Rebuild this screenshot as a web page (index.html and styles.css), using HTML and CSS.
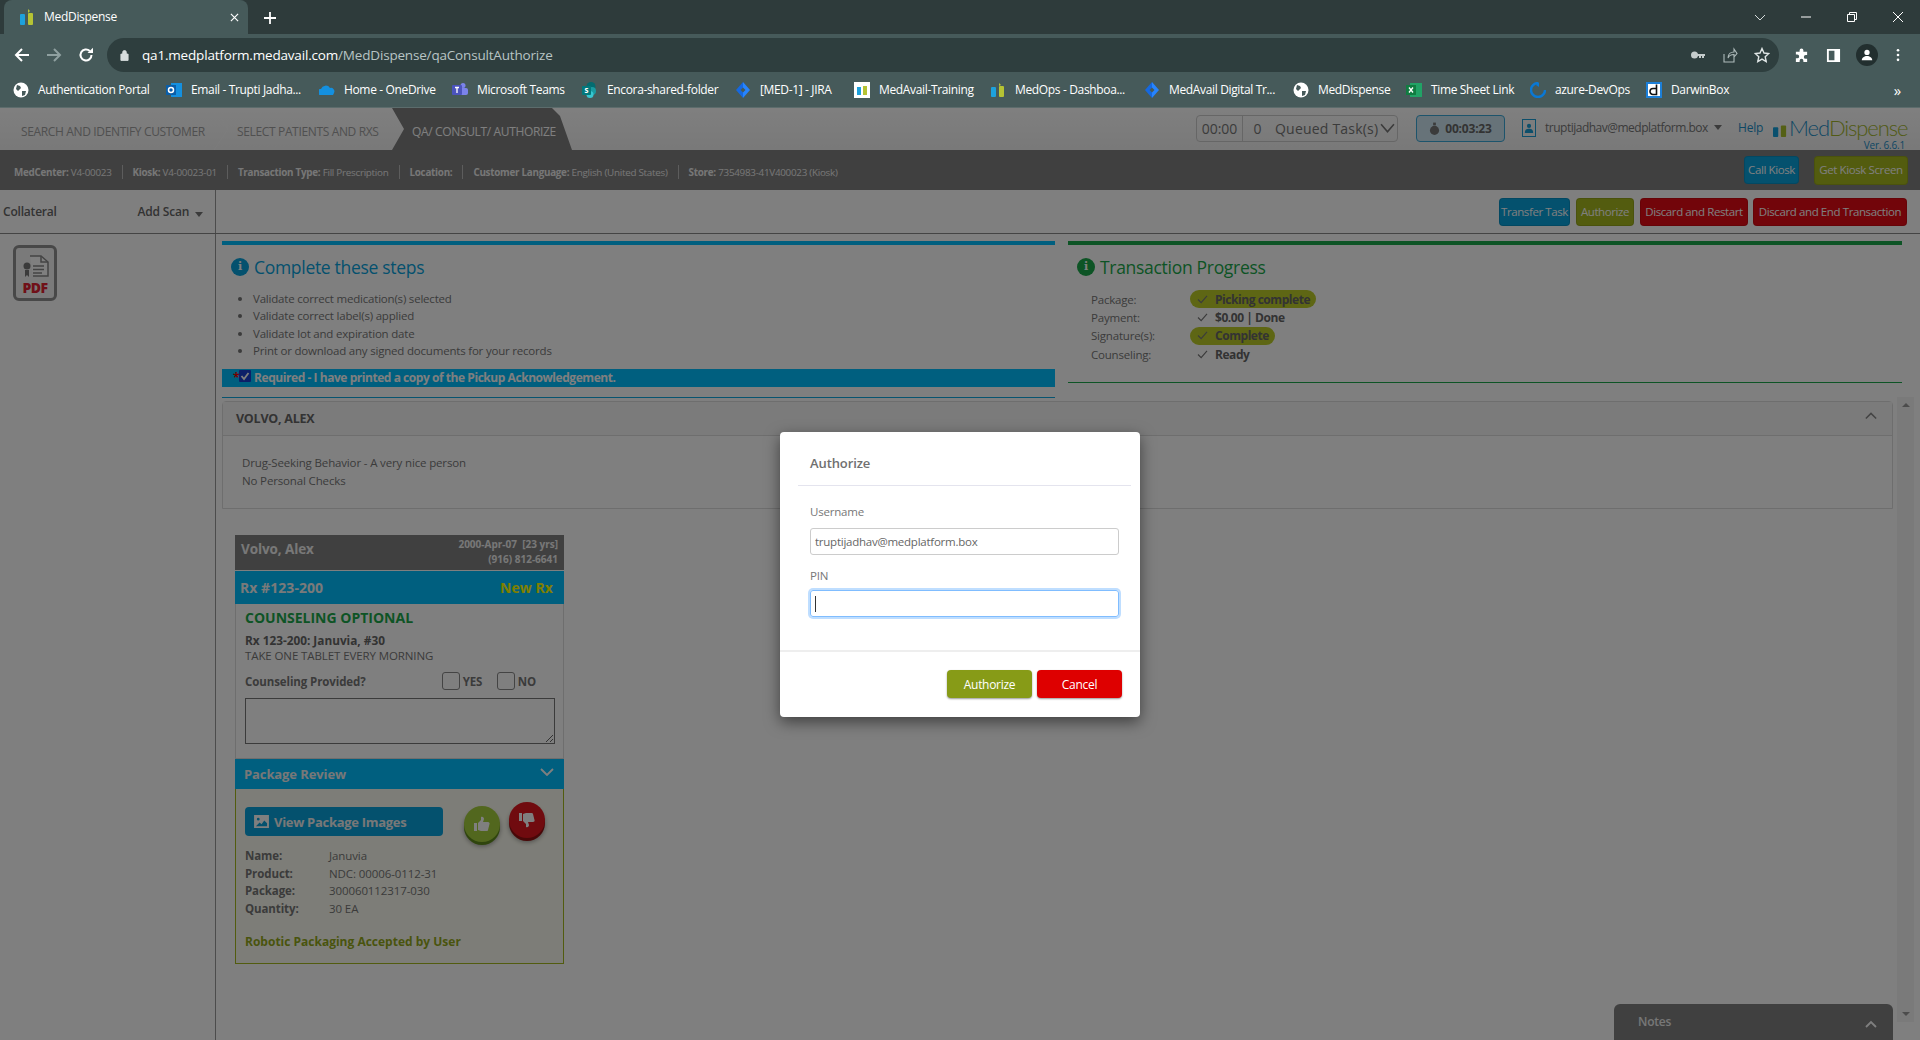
FILE: index.html
```html
<!DOCTYPE html>
<html>
<head>
    <title>MedDispense</title>
    <link rel="stylesheet" href="styles.css">
</head>
<body>

    <!-- Browser chrome -->
    <div class="tabstrip">
        <div class="tab">
            <svg class="tab-icon" viewBox="0 0 16 18"><rect x="1" y="6" width="5" height="11" rx="1" fill="#1da1dc"/><rect x="9" y="5" width="5" height="12" rx="1" fill="#b5c334"/><path d="M9 1l2 2-2 2z" fill="#b5c334"/></svg>
            <span class="tab-title">MedDispense</span>
            <svg class="tab-close" viewBox="0 0 10 10"><path d="M1 1l8 8M9 1l-8 8" stroke="#fff" stroke-width="1.3"/></svg>
        </div>
        <svg class="new-tab" viewBox="0 0 14 14"><path d="M7 1v12M1 7h12" stroke="#fff" stroke-width="1.8"/></svg>
        <div class="window-btns">
            <svg viewBox="0 0 12 12"><path d="M1 4l5 5 5-5" fill="none" stroke="#d5dcdc" stroke-width="1"/></svg>
            <svg viewBox="0 0 12 12"><path d="M1 6h10" stroke="#fff" stroke-width="1"/></svg>
            <svg viewBox="0 0 12 12"><path d="M1.5 3.5h7v7h-7zM3.5 3.5v-2h7v7h-2" fill="none" stroke="#fff" stroke-width="1"/></svg>
            <svg viewBox="0 0 12 12"><path d="M1 1l10 10M11 1L1 11" stroke="#fff" stroke-width="1"/></svg>
        </div>
    </div>

    <div class="toolbar">
        <svg class="nav-icon" viewBox="0 0 16 16"><path d="M15 8H2M8 2L2 8l6 6" fill="none" stroke="#fff" stroke-width="2"/></svg>
        <svg class="nav-icon" viewBox="0 0 16 16"><path d="M1 8h13M8 2l6 6-6 6" fill="none" stroke="#8fa0a0" stroke-width="2"/></svg>
        <svg class="nav-icon" viewBox="0 0 16 16"><path d="M13.5 8A5.5 5.5 0 1 1 11.8 4" fill="none" stroke="#fff" stroke-width="2"/><path d="M9.5 6H15V.8z" fill="#fff"/></svg>
        <div class="omnibox">
            <svg class="lock" viewBox="0 0 10 12"><path d="M1 5h8v7H1zM3 5V3a2 2 0 0 1 4 0v2" fill="#d8dede" stroke="#d8dede"/></svg>
            <span class="url">qa1.medplatform.medavail.com<span class="url-path">/MedDispense/qaConsultAuthorize</span></span>
            <div class="omni-icons">
                <svg viewBox="0 0 16 16"><circle cx="4.5" cy="8" r="3.5" fill="#c5cccc"/><path d="M7 7h8v2h-1v2h-2V9h-1v2H9V9H7z" fill="#c5cccc"/></svg>
                <svg viewBox="0 0 16 16"><path d="M2 7v8h10v-5M6 11c0-4 3-6 6-6V2l3 4.5L12 10V7.5c-3 0-5 1-6 3.500z" fill="none" stroke="#aebaba" stroke-width="1.1"/></svg>
                <svg viewBox="0 0 16 16"><path d="M8 1.500l2 4.500 4.800.5-3.600 3.200 1 4.800L8 12.100l-4.200 2.400 1-4.800L1.200 6.500 6 6z" fill="none" stroke="#dfe5e5" stroke-width="1.400"/></svg>
            </div>
        </div>
        <div class="tool-icons">
            <svg viewBox="0 0 16 16"><path d="M6 2.500a2 2 0 0 1 4 0V4h4v3.500h-1.500a2 2 0 0 0 0 4H14V15H10v-1.500a2 2 0 0 0-4 0V15H2v-4h1.500a2 2 0 0 0 0-4H2V4h4z" fill="#fff"/></svg>
            <svg viewBox="0 0 16 16"><path d="M1 1h14v14H1zM3 3v10h6V3z" fill="#fff" fill-rule="evenodd"/></svg>
            <span class="profile"><svg viewBox="0 0 16 16"><circle cx="8" cy="5" r="3" fill="#fff"/><path d="M2 14c0-3 3-5 6-5s6 2 6 5z" fill="#fff"/></svg></span>
            <svg class="kebab" viewBox="0 0 4 16"><circle cx="2" cy="2.500" r="1.500" fill="#fff"/><circle cx="2" cy="8" r="1.500" fill="#fff"/><circle cx="2" cy="13.500" r="1.500" fill="#fff"/></svg>
        </div>
    </div>

    <div class="bookmarks">
        <div class="bookmark"><svg viewBox="0 0 16 16"><circle cx="8" cy="8" r="7.500" fill="#fff"/><path d="M4 3l3 1 1 2-3 3-2-2zM9 9l4 0-1 4-3 1z" fill="#465a5a"/></svg>Authentication Portal</div>
        <div class="bookmark"><svg viewBox="0 0 16 16"><rect x="5" y="1" width="11" height="14" fill="#1490df"/><rect x="0" y="3" width="10" height="10" fill="#0a5ea8"/><circle cx="5" cy="8" r="2.500" fill="none" stroke="#fff" stroke-width="1.500"/></svg>Email - Trupti Jadha...</div>
        <div class="bookmark"><svg viewBox="0 0 16 16"><path d="M1 13a3 3 0 0 1 1-6 5 5 0 0 1 9-1 3.500 3.500 0 0 1 4 5l-1 2z" fill="#1490df"/></svg>Home - OneDrive</div>
        <div class="bookmark"><svg viewBox="0 0 16 16"><circle cx="11" cy="3.500" r="2.500" fill="#7b83eb"/><rect x="7" y="6" width="9" height="7" rx="2" fill="#7b83eb"/><rect x="0" y="3" width="10" height="10" rx="1" fill="#4b53bc"/><path d="M3 5.500h4M5 5.500V11" stroke="#fff" stroke-width="1.300"/></svg>Microsoft Teams</div>
        <div class="bookmark"><svg viewBox="0 0 16 16"><circle cx="9" cy="4.500" r="4.500" fill="#036c70"/><circle cx="10" cy="9" r="4" fill="#1a9ba1"/><circle cx="8" cy="12.500" r="3.500" fill="#37c6d0"/><rect x="0" y="4" width="9" height="9" rx="1" fill="#03787c"/><text x="2.500" y="11" class="mini-letter">s</text></svg>Encora-shared-folder</div>
        <div class="bookmark"><svg viewBox="0 0 16 16"><path d="M8 0l7 8-7 8z" fill="#2684ff"/><path d="M8 0L1 8l7 8z" fill="#1568e0"/><path d="M8 5.500L10.500 8 8 10.500 5.500 8z" fill="#465a5a"/></svg>[MED-1] - JIRA</div>
        <div class="bookmark"><svg viewBox="0 0 16 16"><rect width="16" height="16" fill="#fff"/><rect x="3" y="5" width="4" height="8" fill="#1da1dc"/><rect x="9" y="4" width="4" height="9" fill="#b5c334"/></svg>MedAvail-Training</div>
        <div class="bookmark"><svg viewBox="0 0 16 16"><rect x="1" y="5" width="5" height="10" rx="1" fill="#1da1dc"/><rect x="9" y="4" width="5" height="11" rx="1" fill="#b5c334"/><path d="M9 1l2 2-2 1z" fill="#b5c334"/></svg>MedOps - Dashboa...</div>
        <div class="bookmark"><svg viewBox="0 0 16 16"><path d="M8 0l7 8-7 8z" fill="#2684ff"/><path d="M8 0L1 8l7 8z" fill="#1568e0"/><path d="M8 5.500L10.500 8 8 10.500 5.500 8z" fill="#465a5a"/></svg>MedAvail Digital Tr...</div>
        <div class="bookmark"><svg viewBox="0 0 16 16"><circle cx="8" cy="8" r="7.500" fill="#fff"/><path d="M4 3l3 1 1 2-3 3-2-2zM9 9l4 0-1 4-3 1z" fill="#465a5a"/></svg>MedDispense</div>
        <div class="bookmark"><svg viewBox="0 0 16 16"><rect x="4" y="1" width="12" height="14" fill="#21a366"/><rect x="0" y="3" width="10" height="10" fill="#107c41"/><path d="M3 5.500l4 5M7 5.500l-4 5" stroke="#fff" stroke-width="1.300"/></svg>Time Sheet Link</div>
        <div class="bookmark"><svg viewBox="0 0 16 16"><path d="M8 1A7 7 0 1 0 15 8" fill="none" stroke="#0a78d4" stroke-width="2.400"/><path d="M9 0l-3 3 3 2z" fill="#0a78d4"/></svg>azure-DevOps</div>
        <div class="bookmark"><svg viewBox="0 0 16 16"><rect width="16" height="16" fill="#1c7fd8"/><rect x="2" y="2" width="12" height="12" fill="#fff"/><path d="M10.500 2.500v10H7a3 3 0 0 1 0-6h3.500" fill="none" stroke="#111" stroke-width="1.600"/></svg>DarwinBox</div>
        <div class="bookmark-more">&raquo;</div>
    </div>

    <!-- MedDispense app, dimmed by the modal backdrop -->
    <div class="app">
        <div class="app-header">
            <div class="step step-one">SEARCH AND IDENTIFY CUSTOMER</div>
            <svg class="step-chevron" viewBox="0 0 14 42"><path d="M0 0l14 21L0 42" fill="none" stroke="#fff" stroke-opacity=".35"/></svg>
            <div class="step step-two">SELECT PATIENTS AND RXS</div>
            <div class="step step-active">QA/ CONSULT/ AUTHORIZE</div>
            <div class="header-right">
                <div class="queue">
                    <span class="queue-time">00:00</span>
                    <span class="queue-count">0</span>
                    <span class="queue-label">Queued Task(s)</span>
                    <svg viewBox="0 0 14 10"><path d="M1 1l6 7 6-7" fill="none" stroke="#777" stroke-width="1.500"/></svg>
                </div>
                <div class="timer">
                    <svg viewBox="0 0 12 14"><circle cx="6" cy="8.500" r="5" fill="#777"/><rect x="4.500" y="0" width="3" height="3" fill="#777"/></svg>
                    00:03:23
                </div>
                <div class="user">
                    <span class="user-icon"><svg viewBox="0 0 12 12"><circle cx="6" cy="3.500" r="2.500" fill="#1a9fd6"/><path d="M1 12c0-4 2-5 5-5s5 1 5 5z" fill="#1a9fd6"/></svg></span>
                    truptijadhav@medplatform.box
                    <span class="caret"></span>
                </div>
                <span class="help">Help</span>
                <div class="logo">
                    <div class="logo-mark">
                        <svg viewBox="0 0 16 20"><rect x="0" y="8" width="6" height="11" rx="1" fill="#12a0dc"/><rect x="9" y="6" width="6" height="13" rx="1" fill="#a9c02a"/></svg>
                        <span class="logo-med">Med</span><span class="logo-dispense">Dispense</span>
                    </div>
                    <div class="logo-ver">Ver. 6.6.1</div>
                </div>
            </div>
        </div>

        <div class="info-bar">
            <span class="info-item"><b>MedCenter:</b> V4-00023</span>
            <span class="info-item"><b>Kiosk:</b> V4-00023-01</span>
            <span class="info-item"><b>Transaction Type:</b> Fill Prescription</span>
            <span class="info-item"><b>Location:</b></span>
            <span class="info-item"><b>Customer Language:</b> English (United States)</span>
            <span class="info-item"><b>Store:</b> 7354983-41V400023 (Kiosk)</span>
            <div class="info-btns">
                <button class="btn btn-blue btn-kiosk">Call Kiosk</button>
                <button class="btn btn-olive btn-kiosk">Get Kiosk Screen</button>
            </div>
        </div>

        <div class="main">
            <div class="sidebar">
                <div class="sidebar-head">
                    <span>Collateral</span>
                    <span class="add-scan">Add Scan <span class="caret"></span></span>
                </div>
                <div class="pdf-icon">
                    <svg viewBox="0 0 30 26"><circle cx="7" cy="12" r="3.500" fill="#777"/><path d="M5 16h4v7l-2-2-2 2z" fill="#777"/><path d="M10 2h11l7 6v14H13" fill="#fff" stroke="#888" stroke-width="1.500"/><path d="M21 2v6h7M13 12h11M13 15.500h11M13 19h9" fill="none" stroke="#888" stroke-width="1.500"/></svg>
                    <span class="pdf-text">PDF</span>
                </div>
            </div>

            <div class="content">
                <div class="action-bar">
                    <button class="btn btn-blue">Transfer Task</button>
                    <button class="btn btn-olive">Authorize</button>
                    <button class="btn btn-red">Discard and Restart</button>
                    <button class="btn btn-red">Discard and End Transaction</button>
                </div>

                <div class="top-panels">
                    <div class="panel panel-steps">
                        <h3 class="panel-title"><span class="info-dot">i</span>Complete these steps</h3>
                        <ul class="step-list">
                            <li>Validate correct medication(s) selected</li>
                            <li>Validate correct label(s) applied</li>
                            <li>Validate lot and expiration date</li>
                            <li>Print or download any signed documents for your records</li>
                        </ul>
                        <div class="required">
                            <span class="star">*</span>
                            <svg viewBox="0 0 12 12"><rect width="12" height="12" rx="1" fill="#1a3fd0"/><path d="M2.500 6l2.500 3 4.500-6" fill="none" stroke="#fff" stroke-width="1.800"/></svg>
                            Required - I have printed a copy of the Pickup Acknowledgement.
                        </div>
                    </div>
                    <div class="panel panel-progress">
                        <h3 class="panel-title"><span class="info-dot">i</span>Transaction Progress</h3>
                        <div class="progress-row">
                            <span class="progress-label">Package:</span>
                            <span class="progress-value pill"><svg viewBox="0 0 12 10"><path d="M1 5l3.500 3.500L11 1" fill="none" stroke="#777" stroke-width="1.300"/></svg>Picking complete</span>
                        </div>
                        <div class="progress-row">
                            <span class="progress-label">Payment:</span>
                            <span class="progress-value"><svg viewBox="0 0 12 10"><path d="M1 5l3.500 3.500L11 1" fill="none" stroke="#777" stroke-width="1.300"/></svg>$0.00 | Done</span>
                        </div>
                        <div class="progress-row">
                            <span class="progress-label">Signature(s):</span>
                            <span class="progress-value pill"><svg viewBox="0 0 12 10"><path d="M1 5l3.500 3.500L11 1" fill="none" stroke="#777" stroke-width="1.300"/></svg>Complete</span>
                        </div>
                        <div class="progress-row">
                            <span class="progress-label">Counseling:</span>
                            <span class="progress-value"><svg viewBox="0 0 12 10"><path d="M1 5l3.500 3.500L11 1" fill="none" stroke="#777" stroke-width="1.300"/></svg>Ready</span>
                        </div>
                    </div>
                </div>

                <div class="lower">
                    <div class="lower-body">
                        <div class="patient-panel">
                            <div class="patient-head">
                                VOLVO, ALEX
                                <svg viewBox="0 0 14 8"><path d="M1 7l6-6 6 6" fill="none" stroke="#888" stroke-width="1.800"/></svg>
                            </div>
                            <div class="patient-notes">
                                <div>Drug-Seeking Behavior - A very nice person</div>
                                <div>No Personal Checks</div>
                            </div>
                        </div>

                        <div class="rx-card">
                            <div class="rx-patient">
                                <span class="rx-name">Volvo, Alex</span>
                                <span class="rx-details">2000-Apr-07 &nbsp;[23 yrs]<br>(916) 812-6641</span>
                            </div>
                            <div class="rx-bar">
                                <span>Rx #123-200</span>
                                <span class="rx-new">New Rx</span>
                            </div>
                            <div class="rx-body">
                                <div class="rx-optional">COUNSELING OPTIONAL</div>
                                <div class="rx-drug">Rx 123-200: Januvia, #30</div>
                                <div class="rx-sig">TAKE ONE TABLET EVERY MORNING</div>
                                <div class="rx-question">
                                    <span>Counseling Provided?</span>
                                    <span class="rx-choices">
                                        <span class="box"></span><span class="choice">YES</span>
                                        <span class="box"></span><span class="choice">NO</span>
                                    </span>
                                </div>
                                <textarea class="rx-text"></textarea>
                            </div>
                            <div class="review-bar">
                                Package Review
                                <svg viewBox="0 0 14 8"><path d="M1 1l6 6 6-6" fill="none" stroke="#fff" stroke-width="1.800"/></svg>
                            </div>
                            <div class="review-body">
                                <div class="review-top">
                                    <button class="btn-images">
                                        <svg viewBox="0 0 16 14"><path d="M0 0h16v14H0zM2 12h12V9l-3-3-3 4-2-2zM4.500 3a1.500 1.500 0 1 0 0 3 1.500 1.500 0 0 0 0-3z" fill="#fff" fill-rule="evenodd"/></svg>
                                        View Package Images
                                    </button>
                                    <span class="round round-green"><svg viewBox="0 0 16 16"><path d="M0 7h3v8H0zM4 7l3-3V1c2-1 3 1 3 2l-1 3h5c1 0 2 1 1.500 2L14 14c0 1-1 1-2 1H7l-3-1z" fill="#fff"/></svg></span>
                                    <span class="round round-red"><svg viewBox="0 0 16 16"><path d="M0 1h3v8H0zM4 9l3 3v3c2 1 3-1 3-2l-1-3h5c1 0 2-1 1.500-2L14 2c0-1-1-1-2-1H7L4 2z" fill="#fff"/></svg></span>
                                </div>
                                <dl class="review-info">
                                    <dt>Name:</dt><dd>Januvia</dd>
                                    <dt>Product:</dt><dd>NDC: 00006-0112-31</dd>
                                    <dt>Package:</dt><dd>300060112317-030</dd>
                                    <dt>Quantity:</dt><dd>30 EA</dd>
                                </dl>
                                <div class="review-result">Robotic Packaging Accepted by User</div>
                            </div>
                        </div>
                    </div>
                    <div class="scrollbar">
                        <span class="arrow-up"></span>
                        <span class="arrow-down"></span>
                    </div>
                </div>
            </div>
        </div>

        <div class="notes">
            Notes
            <svg viewBox="0 0 12 8"><path d="M1 7l5-5 5 5" fill="none" stroke="#fff" stroke-width="1.800"/></svg>
        </div>

        <div class="backdrop"></div>

        <div class="modal">
            <div class="modal-title">Authorize</div>
            <div class="modal-form">
                <label class="field-label">Username</label>
                <input class="field" type="text" value="truptijadhav@medplatform.box">
                <label class="field-label field-label-pin">PIN</label>
                <div class="field field-focus"><span class="text-caret"></span></div>
            </div>
            <div class="modal-footer">
                <button class="modal-btn modal-ok">Authorize</button>
                <button class="modal-btn modal-cancel">Cancel</button>
            </div>
        </div>
    </div>

</body>
</html>
```

FILE: styles.css
```css
* { box-sizing: border-box; }
html, body { margin: 0; padding: 0; }
body { width: 1920px; height: 1040px; overflow: hidden; background: #fff; font-family: "Open Sans", sans-serif; font-size: 11.5px; letter-spacing: -.2px; color: #777; }
button { font-family: inherit; letter-spacing: inherit; }

/* browser chrome */
.tabstrip { height: 34px; background: #2e3b3b; display: flex; align-items: flex-end; color: #fff; }
.tab { width: 244px; height: 34px; margin-left: 4px; background: #465a5a; border-radius: 8px 8px 0 0; display: flex; align-items: center; padding: 0 9px 0 15px; }
.tab-icon { width: 16px; height: 18px; }
.tab-title { margin: -1px 0 0 9px; flex: 1; font-size: 12px; letter-spacing: -.3px; color: #fff; }
.tab-close { width: 9px; height: 9px; }
.new-tab { width: 14px; height: 14px; margin: 0 0 9px 15px; }
.window-btns { margin-left: auto; height: 34px; display: flex; align-items: center; gap: 34px; padding-right: 16px; }
.window-btns svg { width: 12px; height: 12px; }

.toolbar { height: 42px; background: #465a5a; display: flex; align-items: center; padding: 0 13px 0 14px; }
.nav-icon { width: 16px; height: 16px; margin-right: 16px; flex: none; }
.omnibox { width: 1672px; height: 34px; margin-left: -3px; border-radius: 17px; background: #2e3e3e; display: flex; align-items: center; padding: 0 9px 0 13px; flex: none; }
.lock { width: 9px; height: 12px; }
.url { margin-left: 13px; font-size: 13.5px; letter-spacing: -.18px; color: #fff; }
.url-path { color: #b8c4c4; }
.omni-icons { margin-left: auto; display: flex; gap: 16px; }
.omni-icons svg { width: 16px; height: 16px; }
.tool-icons { margin-left: 15px; display: flex; align-items: center; gap: 17px; }
.tool-icons svg { width: 15px; height: 15px; }
.tool-icons .kebab { width: 4px; height: 14px; margin-left: 3px; }
.profile { width: 22px; height: 22px; border-radius: 50%; background: #222f2f; display: flex; align-items: center; justify-content: center; margin: 0 -2px; }
.profile svg { width: 14px; height: 14px; }

.bookmarks { height: 32px; background: #465a5a; display: grid; grid-template-columns: 153px 153px 133px 130px 153px 119px 136px 154px 149px 113px 124px 116px 240px 1fr; align-items: center; padding: 0 0 4px 13px; border-bottom: 1px solid #5c6c6c; }
.bookmark { display: flex; align-items: center; gap: 9px; color: #fff; font-size: 12px; letter-spacing: -.35px; white-space: nowrap; }
.bookmark svg { width: 16px; height: 16px; flex: none; }
.mini-letter { font-size: 8px; fill: #fff; font-family: "Open Sans", sans-serif; font-weight: 700; }
.bookmark-more { color: #fff; font-size: 15px; text-align: right; padding-right: 19px; }

/* app */
.app { position: relative; height: 932px; overflow: hidden; }
.app-header { height: 42px; background: linear-gradient(#fff, #f2f2f2); display: flex; align-items: center; }
.step { font-size: 12px; letter-spacing: -.35px; color: #a0a0a0; height: 42px; padding-top: 4px; display: flex; align-items: center; white-space: nowrap; }
.step-one { width: 214px; padding-left: 21px; }
.step-chevron { width: 14px; height: 42px; margin-right: 2px; }
.step-two { width: 162px; padding-left: 7px; }
.step-active { width: 180px; padding-left: 20px; background: #7f7f7f; color: #fff; clip-path: polygon(0 0, 160px 0, 168px 8px, 180px 42px, 0 42px, 12px 21px); }

.header-right { margin-left: auto; display: flex; align-items: center; height: 42px; }
.queue { width: 202px; height: 27px; border: 1px solid #ccc; border-radius: 4px; display: flex; align-items: center; font-size: 14px; letter-spacing: .2px; color: #777; margin-top: -1px; }
.queue-time { width: 46px; text-align: center; border-right: 1px solid #ccc; line-height: 25px; letter-spacing: 0; }
.queue-count { width: 29px; text-align: center; }
.queue-label { margin-left: 3px; }
.queue svg { width: 15px; height: 11px; margin-left: 2px; }
.timer { width: 89px; height: 27px; margin: -1px 0 0 18px; border: 1px solid #3aa8d8; border-radius: 4px; background: #cfe7f2; display: flex; align-items: center; gap: 5px; justify-content: center; font-size: 12px; font-weight: 700; color: #666; }
.timer svg { width: 11px; height: 14px; }
.user { width: 198px; margin: -3px 0 0 17px; display: flex; align-items: center; font-size: 12px; letter-spacing: -.5px; color: #777; white-space: nowrap; }
.user-icon { width: 14px; height: 18px; border: 1px solid #1a9fd6; display: flex; align-items: center; justify-content: center; margin-right: 9px; flex: none; }
.user-icon svg { width: 10px; height: 10px; }
.caret { display: inline-block; width: 0; height: 0; margin-left: 6px; border-left: 4px solid transparent; border-right: 4px solid transparent; border-top: 5px solid #777; }
.help { width: 32px; margin: -3px 0 0 18px; font-size: 12px; color: #1a8ec8; }
.logo { margin: 0 12px 0 3px; width: 135px; }
.logo-mark { display: flex; align-items: center; height: 26px; margin-top: 7px; font-family: Lato, sans-serif; font-weight: 300; font-size: 22px; letter-spacing: -1.1px; white-space: nowrap; }
.logo-mark svg { width: 14px; height: 18px; margin: 3px 2px 0 0; flex: none; }
.logo-med { color: #1a8ec8; }
.logo-dispense { color: #a3b62c; }
.logo-ver { text-align: right; font-size: 10px; color: #1a8ec8; margin-right: 3px; line-height: 11px; }

.info-bar { height: 40px; background: #808080; color: #eee; display: flex; align-items: center; padding-left: 14px; font-size: 9.85px; letter-spacing: -.27px; }
.info-item { padding: 0 10px; height: 14px; margin-top: 4px; line-height: 14px; border-right: 1px solid #bbb; white-space: nowrap; }
.info-item:first-child { padding-left: 0; }
.info-item:nth-child(6) { border-right: 0; }
.info-btns { margin-left: auto; display: flex; gap: 15px; padding-right: 12px; align-items: center; }

.btn { height: 28px; border: 1px solid rgba(0,0,0,.1); border-radius: 4px; font-size: 11.5px; letter-spacing: -.4px; color: #fff; padding: 0 0 2px; white-space: nowrap; }
.btn-blue { background: #08a2dc; }
.btn-olive { background: #a6b81e; }
.btn-red { background: #e40a14; }
.btn-kiosk:first-child { width: 55px; }
.btn-kiosk:last-child { width: 94px; height: 29px; }

.main { display: flex; height: 850px; }
.sidebar { width: 216px; border-right: 1px solid #999; flex: none; }
.sidebar-head { height: 44px; border-bottom: 1px solid #888; display: flex; justify-content: space-between; align-items: center; padding: 0 13px 0 3px; font-size: 12px; font-weight: 600; color: #666; margin-right: -1px; }
.add-scan .caret { margin-left: 3px; vertical-align: -1px; }
.pdf-icon { width: 44px; height: 56px; margin: 11px 0 0 13px; border: 3px solid #909090; border-radius: 6px; background: #f5f5f5; display: flex; flex-direction: column; align-items: center; padding-top: 5px; }
.pdf-icon svg { width: 30px; height: 28px; }
.pdf-text { font-family: "Open Sans", sans-serif; font-size: 14px; font-weight: 800; letter-spacing: -.5px; color: #e02030; line-height: 14px; }

.content { flex: 1; min-width: 0; display: flex; flex-direction: column; }
.action-bar { height: 44px; border-bottom: 1px solid #888; display: flex; justify-content: flex-end; gap: 5px; padding: 8px 13px 0 0; }
.action-bar .btn:nth-child(1) { width: 71px; }
.action-bar .btn:nth-child(2) { width: 58px; margin-left: 1px; }
.action-bar .btn:nth-child(3) { width: 108px; margin-left: 1px; }
.action-bar .btn:nth-child(4) { width: 154px; }

.top-panels { display: grid; grid-template-columns: 833px 834px; gap: 13px; padding: 7px 0 0 6px; height: 163px; align-items: start; }
.panel-steps { height: 157px; border-top: 4px solid #00bfff; border-bottom: 1px solid #10a8e0; }
.panel-progress { height: 142px; border-top: 4px solid #1aa84a; border-bottom: 1px solid #1aa84a; }
.panel-title { margin: 0; padding: 1px 0 0 9px; height: 42px; display: flex; align-items: center; font-size: 17.5px; font-weight: 400; letter-spacing: -.3px; line-height: 20px; }
.panel-steps .panel-title { color: #08a2dc; }
.panel-progress .panel-title { color: #1aa84a; }
.info-dot { width: 18px; height: 18px; border-radius: 50%; margin-right: 5px; color: #fff; font: 700 11px/18px "DejaVu Serif", serif; text-align: center; letter-spacing: 0; }
.panel-steps .info-dot { background: #08a2dc; }
.panel-progress .info-dot { background: #1aa84a; }
.step-list { margin: 3px 0 0; padding: 0 0 0 31px; line-height: 17.400px; }
.required { margin-top: 9px; height: 18px; background: #00bfff; color: #fff; display: flex; align-items: center; padding-left: 11px; font-weight: 700; font-size: 12px; letter-spacing: -.45px; }
.star { color: #e00; }
.required svg { width: 12px; height: 12px; margin: -4px 3px 0 0; flex: none; }

.progress-row { display: flex; height: 18.300px; align-items: center; padding-left: 23px; }
.progress-row:first-of-type { margin-top: 3px; }
.progress-label { width: 99px; }
.progress-value { display: inline-flex; align-items: center; height: 18px; font-weight: 700; padding: 0 6px 0 7px; color: #666; font-size: 12px; letter-spacing: -.45px; }
.progress-value svg { width: 11px; height: 9px; margin-right: 7px; }
.pill { background: #bccd29; border-radius: 9px; }

.lower { flex: 1; min-height: 0; display: flex; padding-top: 4px; }
.lower-body { flex: 1; padding-left: 6px; }
.scrollbar { width: 17px; margin: -4px 6px 18px 4px; background: #f5f5f5; display: flex; flex-direction: column; justify-content: space-between; align-items: center; padding: 6px 0; }
.arrow-up { border-left: 4px solid transparent; border-right: 4px solid transparent; border-bottom: 4px solid #999; }
.arrow-down { border-left: 4px solid transparent; border-right: 4px solid transparent; border-top: 4px solid #999; }

.patient-panel { width: 1671px; height: 108px; border: 1px solid #ddd; border-radius: 4px 4px 0 0; }
.patient-head { height: 34px; background: #f7f7f7; border-bottom: 1px solid #ddd; display: flex; align-items: center; justify-content: space-between; padding: 0 15px 0 13px; font-size: 12.5px; letter-spacing: -.25px; font-weight: 700; color: #666; }
.patient-head svg { width: 12px; height: 8px; margin-top: -5px; }
.patient-notes { padding: 18px 0 0 19px; line-height: 18px; letter-spacing: -.15px; }

.rx-card { width: 329px; margin: 26px 0 0 13px; letter-spacing: -.1px; }
.rx-patient { height: 35px; background: #808080; display: flex; justify-content: space-between; align-items: center; padding: 0 6px; }
.rx-name { margin-top: -7px; font-size: 13.5px; font-weight: 700; color: #f0f0f0; }
.rx-details { text-align: right; font-size: 10px; font-weight: 700; line-height: 15px; color: #f0f0f0; letter-spacing: 0; margin-top: -2px; }
.rx-bar { height: 33px; margin-top: 1px; background: #00bfff; color: #f4f4f4; display: flex; align-items: center; justify-content: space-between; padding: 0 11px 0 5px; font-size: 14px; font-weight: 700; letter-spacing: .05px; }
.rx-new { color: #ffff00; }
.rx-body { height: 155px; border: 1px solid #ddd; border-top: 0; padding: 0 10px 0 9px; }
.rx-optional { padding-top: 5px; font-size: 14px; font-weight: 700; color: #1aa84a; line-height: 18px; letter-spacing: 0; }
.rx-drug { margin-top: 6px; font-size: 11.8px; font-weight: 700; color: #666; line-height: 15px; letter-spacing: 0; }
.rx-sig { line-height: 16px; }
.rx-question { display: flex; align-items: center; justify-content: space-between; margin-top: 7px; height: 20px; font-weight: 700; color: #777; padding-right: 17px; }
.rx-choices { display: flex; align-items: center; }
.box { width: 18px; height: 18px; border: 1.5px solid #888; border-radius: 3px; margin-right: 3px; }
.choice { width: 34px; }
.choice:last-child { width: auto; }
.rx-text { display: block; width: 310px; height: 46px; margin-top: 7px; border: 1px solid #777; background: #fff; padding: 0; }
.review-bar { height: 30px; background: #00bfff; color: #f0f0f0; display: flex; align-items: center; justify-content: space-between; padding: 0 10px 0 9px; font-size: 13px; font-weight: 700; }
.review-bar svg { width: 14px; height: 8px; margin-top: -4px; }
.review-body { height: 175px; border: 1px solid #a5b81e; border-top: 0; background: #fbfbf0; padding: 0 10px 0 9px; }
.review-top { display: flex; height: 58px; }
.btn-images { width: 198px; height: 29px; margin-top: 18px; border: 0; border-radius: 4px; background: #08a2dc; color: #f0f0f0; font-size: 13px; font-weight: 700; letter-spacing: -.3px; display: flex; align-items: center; padding: 0 9px; gap: 5px; }
.btn-images svg { width: 15px; height: 13px; }
.round { width: 36px; height: 36px; border-radius: 50%; display: flex; align-items: center; justify-content: center; }
.round svg { width: 16px; height: 16px; }
.round-green { margin: 17px 0 0 21px; background: #a5ce3c; box-shadow: 0 3px 0 #5e8a1a, 0 4px 5px rgba(0,0,0,.4); }
.round-red { margin: 13px 0 0 9px; background: #e0161e; box-shadow: 0 3px 0 #901010, 0 4px 5px rgba(0,0,0,.4); }
.review-info { display: grid; grid-template-columns: 84px 1fr; margin: 0; line-height: 17.700px; }
.review-info dt { font-weight: 700; }
.review-info dd { margin: 0; }
.review-result { margin-top: 15px; font-size: 12px; font-weight: 700; color: #93a81a; letter-spacing: 0; }

.notes { position: absolute; left: 1614px; top: 896px; width: 279px; height: 36px; background: #808080; border-radius: 6px 6px 0 0; color: #eee; font-size: 12px; font-weight: 600; display: flex; align-items: center; justify-content: space-between; padding: 0 16px 2px 24px; }
.notes svg { width: 12px; height: 8px; margin-top: 6px; }

.backdrop { position: absolute; inset: 0; background: rgba(0,0,0,.5); }

.modal { position: absolute; left: 780px; top: 324px; width: 360px; height: 285px; background: #fff; border-radius: 4px; box-shadow: 0 5px 15px rgba(0,0,0,.5); }
.modal-title { margin: 0 9px 0 18px; height: 54px; padding: 22px 0 0 12px; border-bottom: 1px solid #e4e4ee; font-size: 13px; font-weight: 600; color: #707070; letter-spacing: -.1px; }
.modal-form { padding: 18px 21px 0 30px; height: 166px; border-bottom: 2px solid #eee; }
.field-label { display: block; line-height: 16px; color: #777; }
.field-label-pin { margin-top: 13px; }
.field { display: block; width: 309px; height: 27px; margin-top: 8px; border: 1px solid #ccc; border-radius: 3px; padding: 0 4px; font-family: inherit; font-size: 11.500px; letter-spacing: -.25px; color: #666; outline: 0; }
.field-focus { position: relative; border-color: #80bdff; box-shadow: 0 0 0 2px rgba(0,123,255,.25); margin-top: 6px; }
.text-caret { position: absolute; left: 4px; top: 5px; width: 1px; height: 16px; background: #333; }
.modal-footer { display: flex; justify-content: flex-end; gap: 5px; padding: 18px 18px 0 0; }
.modal-btn { width: 85px; height: 28px; border: 0; border-radius: 4px; color: #fff; font-size: 12px; letter-spacing: -.3px; box-shadow: 0 1px 2px rgba(0,0,0,.4); }
.modal-ok { background: #879b17; }
.modal-cancel { background: #de0000; }
```
